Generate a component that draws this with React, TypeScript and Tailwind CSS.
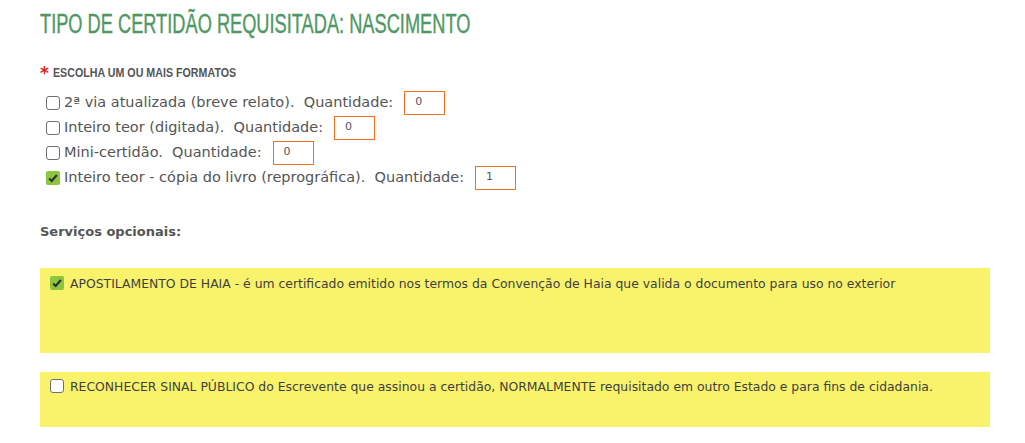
import React from "react";

const formatos = [
  { label: "2ª via atualizada (breve relato).", qtd: "0", checked: false },
  { label: "Inteiro teor (digitada).", qtd: "0", checked: false },
  { label: "Mini-certidão.", qtd: "0", checked: false },
  { label: "Inteiro teor - cópia do livro (reprográfica).", qtd: "1", checked: true },
];

const Box = ({ checked }: { checked: boolean }) =>
  checked ? (
    <span className="inline-flex h-[14px] w-[14px] shrink-0 items-center justify-center rounded-[2px] bg-[#8cc63f]">
      <svg viewBox="0 0 14 14" className="h-[12px] w-[12px]">
        <path d="M2.5 7.5 L5.5 10.5 L11.5 3.5" fill="none" stroke="#2d2d2d" strokeWidth="2.4" />
      </svg>
    </span>
  ) : (
    <span className="inline-block h-[14px] w-[14px] shrink-0 rounded-[3px] border border-[#6f6f6f] bg-white" />
  );

export default function App() {
  return (
    <div className="min-h-[443px] w-[1025px] bg-white pl-10 pr-[35px] pt-[10px] font-['DejaVu_Sans',sans-serif] text-[#555]">
      {/* titulo */}
      <h1 className="origin-left scale-x-[0.675] whitespace-nowrap font-['Liberation_Sans',sans-serif] text-[27px] leading-[28px] text-[#4f9863] [-webkit-text-stroke:0.4px_#4f9863]">
        TIPO DE CERTIDÃO REQUISITADA: NASCIMENTO
      </h1>

      <div className="mt-[26px] flex items-center gap-[4px]">
        <span className="text-[17px] font-bold leading-[10px] text-[#e0221c]">*</span>
        <span className="origin-left scale-x-[0.89] whitespace-nowrap font-['Liberation_Sans',sans-serif] text-[12px] font-bold text-[#555]">
          ESCOLHA UM OU MAIS FORMATOS
        </span>
      </div>

      <div className="mt-[8px] flex flex-col pl-[6px]">
        {formatos.map((f) => (
          <div key={f.label} className="flex h-[25px] items-center text-[14.5px]">
            <Box checked={f.checked} />
            <span className="ml-[4px] whitespace-pre">{f.label}{"  "}Quantidade:</span>
            <span className="ml-[11px] flex h-[24px] w-[41px] items-center border border-[#f07021] pl-[10px] text-[11px] text-[#555]">
              {f.qtd}
            </span>
          </div>
        ))}
      </div>

      <div className="mt-[32px] text-[13px] font-bold text-[#555]">Serviços opcionais:</div>

      <div className="mt-[26px] flex h-[85px] items-start gap-[6px] bg-[#f9f36c] px-[10px] pt-[7px] text-[12.4px] text-[#3f3f3f]">
        <span className="mt-[1px]"><Box checked /></span>
        <span>APOSTILAMENTO DE HAIA - é um certificado emitido nos termos da Convenção de Haia que valida o documento para uso no exterior</span>
      </div>

      <div className="mt-[19px] flex h-[55px] items-start gap-[6px] bg-[#f9f36c] px-[10px] pt-[6px] text-[12.4px] text-[#3f3f3f]">
        <span className="mt-[1px]"><Box checked={false} /></span>
        <span>RECONHECER SINAL PÚBLICO do Escrevente que assinou a certidão, NORMALMENTE requisitado em outro Estado e para fins de cidadania.</span>
      </div>
    </div>
  );
}
